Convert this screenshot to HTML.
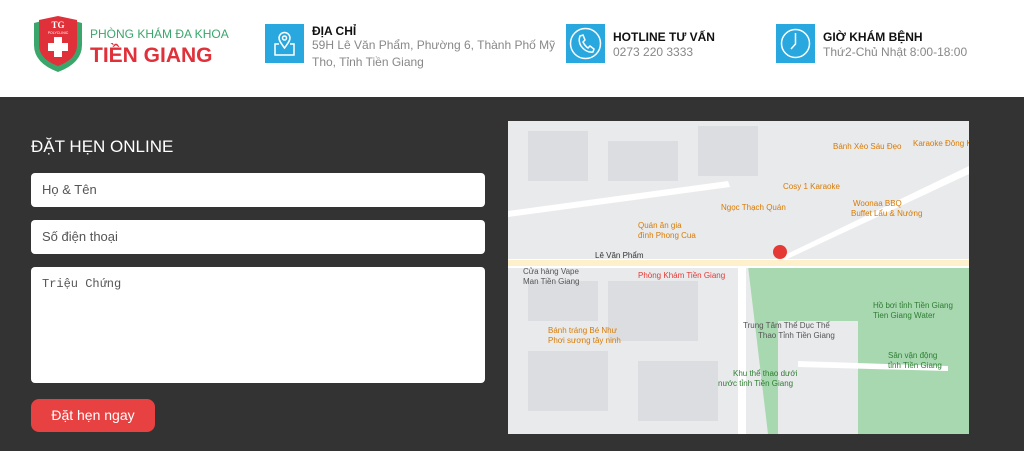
<!DOCTYPE html>
<html><head><meta charset="utf-8"><style>
*{margin:0;padding:0;box-sizing:border-box}
body{width:1024px;height:451px;overflow:hidden;font-family:"Liberation Sans",sans-serif;background:#fff;position:relative}
.hdr{position:absolute;left:0;top:0;width:1024px;height:97px;background:#fff}
.dark{position:absolute;left:0;top:97px;width:1024px;height:354px;background:#333}
.ib{position:absolute;width:39px;height:39px;background:#29a8e0;top:24px}
.t{position:absolute;font-size:12px;font-weight:bold;color:#111}
.s{position:absolute;font-size:12px;color:#888;line-height:17px}
.in{position:absolute;left:31px;width:454px;background:#fff;border-radius:4px;font-size:13px;color:#555;padding:10px 11px}
</style></head><body>
<div class="hdr">
<svg style="position:absolute;left:31px;top:15px" width="54" height="58" viewBox="0 0 54 58">
<path d="M3 8 L27 2 L51 8 L51 30 Q51 48 27 57 Q3 48 3 30Z" fill="#3aa66b"/>
<path d="M8 5 L27 1 L46 5 L46 30 Q46 44 27 51 Q8 44 8 30Z" fill="#e0303a"/>
<text x="27" y="13" font-size="9" fill="#fff" text-anchor="middle" font-family="Liberation Serif" font-weight="bold">TG</text>
<text x="27" y="19" font-size="3.5" fill="#fff" text-anchor="middle">POLYCLINIC</text>
<rect x="23" y="22" width="8" height="20" fill="#fff"/><rect x="17" y="28" width="20" height="8" fill="#fff"/>
</svg>
<div style="position:absolute;left:90px;top:27px;font-size:12px;color:#3aa66b">PHÒNG KHÁM ĐA KHOA</div>
<div style="position:absolute;left:90px;top:44px;font-size:21px;font-weight:bold;color:#e0303a">TIỀN GIANG</div>
<div class="ib" style="left:265px"><svg width="39" height="39" viewBox="0 0 39 39" fill="none" stroke="#fff" stroke-width="1.5"><path d="M19.5 24 C15 18 14 16 14 14 A5.5 5.5 0 0 1 25 14 C25 16 24 18 19.5 24Z"/><circle cx="19.5" cy="14" r="2"/><path d="M14 20 H10 V31 H29 V20 H25"/></svg></div>
<div class="t" style="left:312px;top:24px">ĐỊA CHỈ</div>
<div class="s" style="left:312px;top:37px;width:250px">59H Lê Văn Phẩm, Phường 6, Thành Phố Mỹ Tho, Tỉnh Tiền Giang</div>
<div class="ib" style="left:566px"><svg width="39" height="39" viewBox="0 0 39 39" fill="none" stroke="#fff" stroke-width="1.5"><circle cx="19.5" cy="19.5" r="15"/><path d="M14 12 L17 11 L19 16 L17 18 Q19 22 22 24 L24 22 L28 25 L27 28 Q20 29 15 22 Q12 17 14 12Z"/></svg></div>
<div class="t" style="left:613px;top:30px">HOTLINE TƯ VẤN</div>
<div class="s" style="left:613px;top:44px">0273 220 3333</div>
<div class="ib" style="left:776px"><svg width="39" height="39" viewBox="0 0 39 39" fill="none" stroke="#fff" stroke-width="1.5"><circle cx="19.5" cy="19.5" r="14"/><path d="M19.5 9 V20 L15 25"/></svg></div>
<div class="t" style="left:823px;top:30px">GIỜ KHÁM BỆNH</div>
<div class="s" style="left:823px;top:44px">Thứ2-Chủ Nhật 8:00-18:00</div>
</div>
<div class="dark">
<div style="position:absolute;left:31px;top:40px;font-size:17px;color:#fff">ĐẶT HẸN ONLINE</div>
<div class="in" style="top:76px;height:34px;padding:9px 11px">Họ &amp; Tên</div>
<div class="in" style="top:123px;height:34px;padding:9px 11px">Số điện thoại</div>
<div class="in" style="top:170px;height:116px;font-family:'Liberation Mono',monospace;font-size:12px">Triệu Chứng</div>
<div style="position:absolute;left:31px;top:302px;width:124px;height:33px;background:#e84141;border-radius:8px;color:#fff;font-size:14px;text-align:center;line-height:33px">Đặt hẹn ngay</div>
<svg style="position:absolute;left:508px;top:24px" width="461" height="313" viewBox="0 0 461 313">
<rect width="461" height="313" fill="#e9eaec"/>
<g fill="#dcdde0"><rect x="20" y="10" width="60" height="50"/><rect x="100" y="20" width="70" height="40"/><rect x="190" y="5" width="60" height="50"/><rect x="20" y="160" width="70" height="40"/><rect x="100" y="160" width="90" height="60"/><rect x="20" y="230" width="80" height="60"/><rect x="130" y="240" width="80" height="60"/></g>
<path d="M240 145 L461 145 L461 313 L260 313 Z" fill="#a8d8b0"/>
<rect x="270" y="200" width="80" height="113" fill="#e9eaec"/>
<path d="M0 138 L461 138 L461 147 L0 147Z" fill="#fff"/>
<path d="M250 147 L461 45 L461 53 L260 147Z" fill="#fff"/>
<path d="M230 147 L230 313 L238 313 L238 147Z" fill="#fff"/>
<path d="M0 90 L220 60 L222 66 L0 96Z" fill="#fff"/>
<path d="M290 240 L440 245 L440 250 L290 246Z" fill="#fff"/>
<rect x="0" y="139" width="461" height="6" fill="#fbe6a6" opacity=".6"/>
<circle cx="272" cy="131" r="7" fill="#e53935"/>
<g font-size="8" font-family="Liberation Sans">
<text x="87" y="137" fill="#333">Lê Văn Phẩm</text>
<text x="130" y="107" fill="#d97a00">Quán ăn gia</text>
<text x="130" y="117" fill="#d97a00">đình Phong Cua</text>
<text x="213" y="89" fill="#d97a00">Ngọc Thạch Quán</text>
<text x="275" y="68" fill="#d97a00">Cosy 1 Karaoke</text>
<text x="325" y="28" fill="#d97a00">Bánh Xèo Sáu Đẹo</text>
<text x="405" y="25" fill="#d97a00">Karaoke Đông K</text>
<text x="345" y="85" fill="#d97a00">Woonaa BBQ</text>
<text x="343" y="95" fill="#d97a00">Buffet Lẩu &amp; Nướng</text>
<text x="130" y="157" fill="#e53935">Phòng Khám Tiền Giang</text>
<text x="15" y="153" fill="#555">Cửa hàng Vape</text>
<text x="15" y="163" fill="#555">Man Tiền Giang</text>
<text x="235" y="207" fill="#555">Trung Tâm Thể Dục Thể</text>
<text x="250" y="217" fill="#555">Thao Tỉnh Tiền Giang</text>
<text x="365" y="187" fill="#2e7d32">Hồ bơi tỉnh Tiền Giang</text>
<text x="365" y="197" fill="#2e7d32">Tien Giang Water</text>
<text x="380" y="237" fill="#2e7d32">Sân vận động</text>
<text x="380" y="247" fill="#2e7d32">tỉnh Tiền Giang</text>
<text x="225" y="255" fill="#2e7d32">Khu thể thao dưới</text>
<text x="210" y="265" fill="#2e7d32">nước tỉnh Tiền Giang</text>
<text x="40" y="212" fill="#d97a00">Bánh tráng Bé Như</text>
<text x="40" y="222" fill="#d97a00">Phơi sương tây ninh</text>
</g>
</svg>
</div>
</body></html>
